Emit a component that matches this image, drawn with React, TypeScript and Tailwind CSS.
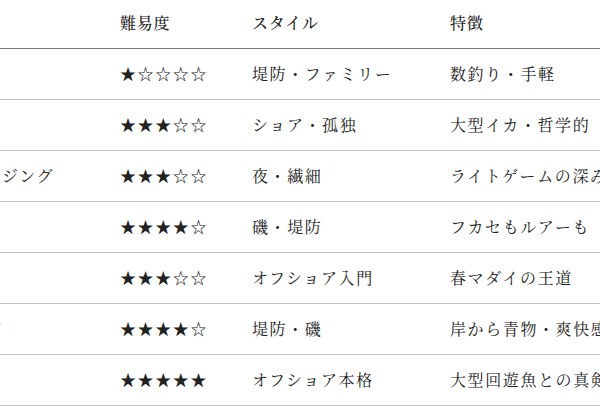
const rows = [
  { name: "サビキ釣り", level: 1, style: "堤防・ファミリー", note: "数釣り・手軽" },
  { name: "エギング", level: 3, style: "ショア・孤独", note: "大型イカ・哲学的" },
  { name: "メバリング・アジング", level: 3, style: "夜・繊細", note: "ライトゲームの深み" },
  { name: "チヌ釣り", level: 4, style: "磯・堤防", note: "フカセもルアーも" },
  { name: "タイラバ", level: 3, style: "オフショア入門", note: "春マダイの王道" },
  { name: "ショアジギング", level: 4, style: "堤防・磯", note: "岸から青物・爽快感" },
  { name: "ジギング", level: 5, style: "オフショア本格", note: "大型回遊魚との真剣勝負" },
];

function Stars({ n }: { n: number }) {
  return <span>{"★".repeat(n) + "☆".repeat(5 - n)}</span>;
}

export default function App() {
  return (
    <div
      className="w-[600px] h-[415px] overflow-hidden bg-white text-[#222]"
      style={{ fontFamily: '"Noto Serif CJK JP", "Liberation Serif", "Noto Sans CJK JP", serif' }}
    >
      <table className="ml-[-136px] border-collapse table-fixed w-[920px] text-[16px] leading-[18px]">
        <colgroup>
          <col className="w-[240px]" />
          <col className="w-[132px]" />
          <col className="w-[198px]" />
          <col className="w-[350px]" />
        </colgroup>
        <thead>
          <tr className="border-b border-[#777]">
            <th className="pl-4 pt-[14px] pb-[16px] text-left font-medium tracking-[0.05em] whitespace-nowrap">釣り方</th>
            <th className="pl-4 pt-[14px] pb-[16px] text-left font-medium tracking-[0.05em] whitespace-nowrap">難易度</th>
            <th className="pl-4 pt-[14px] pb-[16px] text-left font-medium tracking-[0.05em] whitespace-nowrap">スタイル</th>
            <th className="pl-4 pt-[14px] pb-[16px] text-left font-medium tracking-[0.05em] whitespace-nowrap">特徴</th>
          </tr>
        </thead>
        <tbody className="tracking-[0.1em]">
          {rows.map((r) => (
            <tr key={r.name} className="border-b border-[#c4c4c4]">
              <td className="pl-4 py-4 whitespace-nowrap">{r.name}</td>
              <td className="pl-4 py-4 whitespace-nowrap">
                <Stars n={r.level} />
              </td>
              <td className="pl-4 py-4 whitespace-nowrap">{r.style}</td>
              <td className="pl-4 py-4 whitespace-nowrap">{r.note}</td>
            </tr>
          ))}
        </tbody>
      </table>
    </div>
  );
}
